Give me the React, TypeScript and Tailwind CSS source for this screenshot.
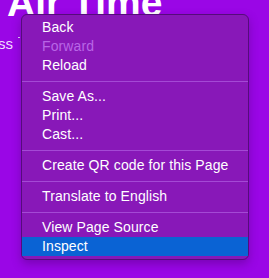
export default function App() {
  const groups = [
    ["Back", "Forward", "Reload"],
    ["Save As...", "Print...", "Cast..."],
    ["Create QR code for this Page"],
    ["Translate to English"],
    ["View Page Source", "Inspect"],
  ];

  return (
    <div className="relative w-[269px] h-[278px] overflow-hidden bg-[#9a06e6] font-['Liberation_Sans',Arial,sans-serif]">
      {/* page content behind the menu */}
      <div className="absolute left-[7px] top-[-17px] text-[39px] font-bold leading-none text-white whitespace-nowrap">
        Air Time
      </div>
      <div className="absolute left-[-2px] top-[36px] text-[15px] leading-none text-[#f2dcff]">ss</div>
      <div className="absolute left-[18px] top-[37px] w-[2px] h-px bg-[#e8d0ff]" />

      {/* context menu */}
      <div className="absolute left-[21px] top-[14px] w-[228px] rounded-[6px] border border-[#560b7d] bg-[#8818b8] py-[3px] shadow-[0_4px_10px_rgba(60,0,90,0.35)]">
        {groups.map((g, gi) => (
          <div key={gi}>
            {gi > 0 && (
              <div className="h-[12px] flex items-center">
                <div className="h-px w-full bg-[#a449d5]" />
              </div>
            )}
            {g.map((item) => (
              <div
                key={item}
                className={
                  "h-[19px] pl-[20px] flex items-center text-[14px] tracking-[0.1px] whitespace-nowrap " +
                  (item === "Inspect"
                    ? "bg-[#0a63d4] text-white"
                    : item === "Forward"
                    ? "text-[#b866e6]"
                    : "text-white")
                }
              >
                {item}
              </div>
            ))}
          </div>
        ))}
      </div>
    </div>
  );
}
